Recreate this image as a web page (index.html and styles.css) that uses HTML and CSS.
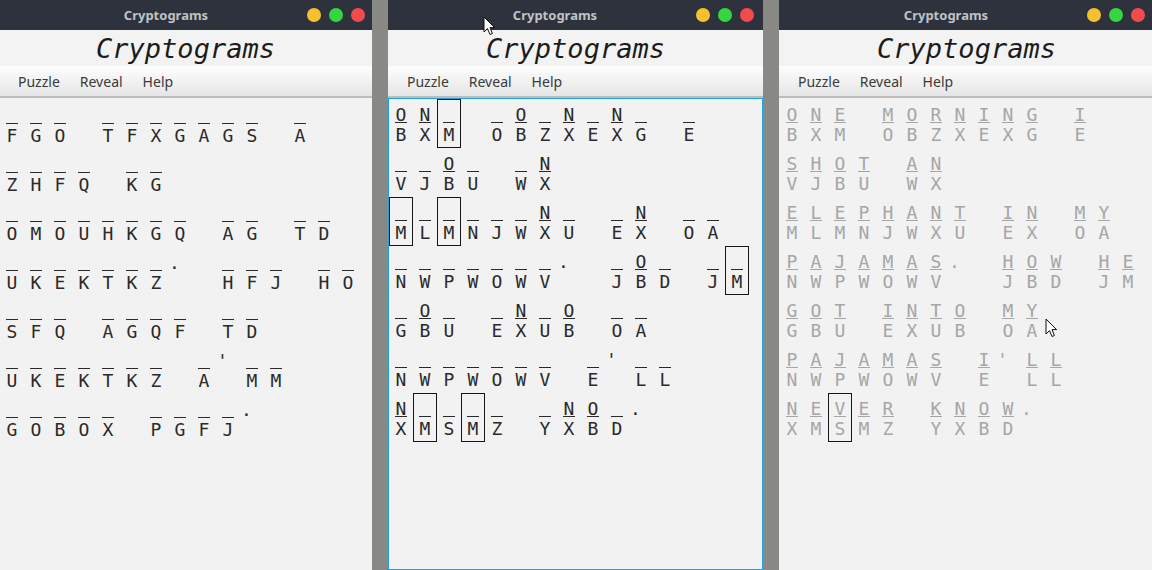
FILE: index.html
```html
<!DOCTYPE html>
<html>
<head>
<meta charset="utf-8">
<title>Cryptograms</title>
<link rel="stylesheet" href="styles.css">
</head>
<body>
<div class="desk">
  <section class="win win-first">
    <div class="titlebar"><span class="ttl">Cryptograms</span><span class="lights"><span class="light yellow"></span><span class="light green"></span><span class="light red"></span></span></div>
    <div class="header">Cryptograms</div>
    <nav class="menubar"><span class="menu">Puzzle</span><span class="menu">Reveal</span><span class="menu">Help</span></nav>
    <div class="content first-content">
      <span class="w"><span class="c"><span class="g"></span><span class="k">F</span></span><span class="c"><span class="g"></span><span class="k">G</span></span><span class="c"><span class="g"></span><span class="k">O</span></span></span>
      <span class="w"><span class="c"><span class="g"></span><span class="k">T</span></span><span class="c"><span class="g"></span><span class="k">F</span></span><span class="c"><span class="g"></span><span class="k">X</span></span><span class="c"><span class="g"></span><span class="k">G</span></span><span class="c"><span class="g"></span><span class="k">A</span></span><span class="c"><span class="g"></span><span class="k">G</span></span><span class="c"><span class="g"></span><span class="k">S</span></span></span>
      <span class="w"><span class="c"><span class="g"></span><span class="k">A</span></span></span>
      <span class="w"><span class="c"><span class="g"></span><span class="k">Z</span></span><span class="c"><span class="g"></span><span class="k">H</span></span><span class="c"><span class="g"></span><span class="k">F</span></span><span class="c"><span class="g"></span><span class="k">Q</span></span></span>
      <span class="w"><span class="c"><span class="g"></span><span class="k">K</span></span><span class="c"><span class="g"></span><span class="k">G</span></span></span>
      <span class="w"><span class="c"><span class="g"></span><span class="k">O</span></span><span class="c"><span class="g"></span><span class="k">M</span></span><span class="c"><span class="g"></span><span class="k">O</span></span><span class="c"><span class="g"></span><span class="k">U</span></span><span class="c"><span class="g"></span><span class="k">H</span></span><span class="c"><span class="g"></span><span class="k">K</span></span><span class="c"><span class="g"></span><span class="k">G</span></span><span class="c"><span class="g"></span><span class="k">Q</span></span></span>
      <span class="w"><span class="c"><span class="g"></span><span class="k">A</span></span><span class="c"><span class="g"></span><span class="k">G</span></span></span>
      <span class="w"><span class="c"><span class="g"></span><span class="k">T</span></span><span class="c"><span class="g"></span><span class="k">D</span></span></span>
      <span class="w"><span class="c"><span class="g"></span><span class="k">U</span></span><span class="c"><span class="g"></span><span class="k">K</span></span><span class="c"><span class="g"></span><span class="k">E</span></span><span class="c"><span class="g"></span><span class="k">K</span></span><span class="c"><span class="g"></span><span class="k">T</span></span><span class="c"><span class="g"></span><span class="k">K</span></span><span class="c"><span class="g"></span><span class="k">Z</span></span><span class="c p"><span class="g">.</span></span></span>
      <span class="w"><span class="c"><span class="g"></span><span class="k">H</span></span><span class="c"><span class="g"></span><span class="k">F</span></span><span class="c"><span class="g"></span><span class="k">J</span></span></span>
      <span class="w"><span class="c"><span class="g"></span><span class="k">H</span></span><span class="c"><span class="g"></span><span class="k">O</span></span></span>
      <span class="w"><span class="c"><span class="g"></span><span class="k">S</span></span><span class="c"><span class="g"></span><span class="k">F</span></span><span class="c"><span class="g"></span><span class="k">Q</span></span></span>
      <span class="w"><span class="c"><span class="g"></span><span class="k">A</span></span><span class="c"><span class="g"></span><span class="k">G</span></span><span class="c"><span class="g"></span><span class="k">Q</span></span><span class="c"><span class="g"></span><span class="k">F</span></span></span>
      <span class="w"><span class="c"><span class="g"></span><span class="k">T</span></span><span class="c"><span class="g"></span><span class="k">D</span></span></span>
      <span class="w"><span class="c"><span class="g"></span><span class="k">U</span></span><span class="c"><span class="g"></span><span class="k">K</span></span><span class="c"><span class="g"></span><span class="k">E</span></span><span class="c"><span class="g"></span><span class="k">K</span></span><span class="c"><span class="g"></span><span class="k">T</span></span><span class="c"><span class="g"></span><span class="k">K</span></span><span class="c"><span class="g"></span><span class="k">Z</span></span></span>
      <span class="w"><span class="c"><span class="g"></span><span class="k">A</span></span><span class="c p"><span class="g">'</span></span><span class="c"><span class="g"></span><span class="k">M</span></span><span class="c"><span class="g"></span><span class="k">M</span></span></span>
      <span class="w"><span class="c"><span class="g"></span><span class="k">G</span></span><span class="c"><span class="g"></span><span class="k">O</span></span><span class="c"><span class="g"></span><span class="k">B</span></span><span class="c"><span class="g"></span><span class="k">O</span></span><span class="c"><span class="g"></span><span class="k">X</span></span></span>
      <span class="w"><span class="c"><span class="g"></span><span class="k">P</span></span><span class="c"><span class="g"></span><span class="k">G</span></span><span class="c"><span class="g"></span><span class="k">F</span></span><span class="c"><span class="g"></span><span class="k">J</span></span><span class="c p"><span class="g">.</span></span></span>
    </div>
  </section>

  <section class="win">
    <div class="titlebar"><span class="ttl">Cryptograms</span><span class="lights"><span class="light yellow"></span><span class="light green"></span><span class="light red"></span></span></div>
    <div class="header">Cryptograms</div>
    <nav class="menubar"><span class="menu">Puzzle</span><span class="menu">Reveal</span><span class="menu">Help</span></nav>
    <div class="content focus">
      <span class="w"><span class="c"><span class="g">O</span><span class="k">B</span></span><span class="c"><span class="g">N</span><span class="k">X</span></span><span class="c sel"><span class="g"></span><span class="k">M</span></span></span>
      <span class="w"><span class="c"><span class="g"></span><span class="k">O</span></span><span class="c"><span class="g">O</span><span class="k">B</span></span><span class="c"><span class="g"></span><span class="k">Z</span></span><span class="c"><span class="g">N</span><span class="k">X</span></span><span class="c"><span class="g"></span><span class="k">E</span></span><span class="c"><span class="g">N</span><span class="k">X</span></span><span class="c"><span class="g"></span><span class="k">G</span></span></span>
      <span class="w"><span class="c"><span class="g"></span><span class="k">E</span></span></span>
      <span class="w"><span class="c"><span class="g"></span><span class="k">V</span></span><span class="c"><span class="g"></span><span class="k">J</span></span><span class="c"><span class="g">O</span><span class="k">B</span></span><span class="c"><span class="g"></span><span class="k">U</span></span></span>
      <span class="w"><span class="c"><span class="g"></span><span class="k">W</span></span><span class="c"><span class="g">N</span><span class="k">X</span></span></span>
      <span class="w"><span class="c sel"><span class="g"></span><span class="k">M</span></span><span class="c"><span class="g"></span><span class="k">L</span></span><span class="c sel"><span class="g"></span><span class="k">M</span></span><span class="c"><span class="g"></span><span class="k">N</span></span><span class="c"><span class="g"></span><span class="k">J</span></span><span class="c"><span class="g"></span><span class="k">W</span></span><span class="c"><span class="g">N</span><span class="k">X</span></span><span class="c"><span class="g"></span><span class="k">U</span></span></span>
      <span class="w"><span class="c"><span class="g"></span><span class="k">E</span></span><span class="c"><span class="g">N</span><span class="k">X</span></span></span>
      <span class="w"><span class="c"><span class="g"></span><span class="k">O</span></span><span class="c"><span class="g"></span><span class="k">A</span></span></span>
      <span class="w"><span class="c"><span class="g"></span><span class="k">N</span></span><span class="c"><span class="g"></span><span class="k">W</span></span><span class="c"><span class="g"></span><span class="k">P</span></span><span class="c"><span class="g"></span><span class="k">W</span></span><span class="c"><span class="g"></span><span class="k">O</span></span><span class="c"><span class="g"></span><span class="k">W</span></span><span class="c"><span class="g"></span><span class="k">V</span></span><span class="c p"><span class="g">.</span></span></span>
      <span class="w"><span class="c"><span class="g"></span><span class="k">J</span></span><span class="c"><span class="g">O</span><span class="k">B</span></span><span class="c"><span class="g"></span><span class="k">D</span></span></span>
      <span class="w"><span class="c"><span class="g"></span><span class="k">J</span></span><span class="c sel"><span class="g"></span><span class="k">M</span></span></span>
      <span class="w"><span class="c"><span class="g"></span><span class="k">G</span></span><span class="c"><span class="g">O</span><span class="k">B</span></span><span class="c"><span class="g"></span><span class="k">U</span></span></span>
      <span class="w"><span class="c"><span class="g"></span><span class="k">E</span></span><span class="c"><span class="g">N</span><span class="k">X</span></span><span class="c"><span class="g"></span><span class="k">U</span></span><span class="c"><span class="g">O</span><span class="k">B</span></span></span>
      <span class="w"><span class="c"><span class="g"></span><span class="k">O</span></span><span class="c"><span class="g"></span><span class="k">A</span></span></span>
      <span class="w"><span class="c"><span class="g"></span><span class="k">N</span></span><span class="c"><span class="g"></span><span class="k">W</span></span><span class="c"><span class="g"></span><span class="k">P</span></span><span class="c"><span class="g"></span><span class="k">W</span></span><span class="c"><span class="g"></span><span class="k">O</span></span><span class="c"><span class="g"></span><span class="k">W</span></span><span class="c"><span class="g"></span><span class="k">V</span></span></span>
      <span class="w"><span class="c"><span class="g"></span><span class="k">E</span></span><span class="c p"><span class="g">'</span></span><span class="c"><span class="g"></span><span class="k">L</span></span><span class="c"><span class="g"></span><span class="k">L</span></span></span>
      <span class="w"><span class="c"><span class="g">N</span><span class="k">X</span></span><span class="c sel"><span class="g"></span><span class="k">M</span></span><span class="c"><span class="g"></span><span class="k">S</span></span><span class="c sel"><span class="g"></span><span class="k">M</span></span><span class="c"><span class="g"></span><span class="k">Z</span></span></span>
      <span class="w"><span class="c"><span class="g"></span><span class="k">Y</span></span><span class="c"><span class="g">N</span><span class="k">X</span></span><span class="c"><span class="g">O</span><span class="k">B</span></span><span class="c"><span class="g"></span><span class="k">D</span></span><span class="c p"><span class="g">.</span></span></span>
    </div>
  </section>

  <section class="win">
    <div class="titlebar"><span class="ttl">Cryptograms</span><span class="lights"><span class="light yellow"></span><span class="light green"></span><span class="light red"></span></span></div>
    <div class="header">Cryptograms</div>
    <nav class="menubar"><span class="menu">Puzzle</span><span class="menu">Reveal</span><span class="menu">Help</span></nav>
    <div class="content solved">
      <span class="w"><span class="c"><span class="g">O</span><span class="k">B</span></span><span class="c"><span class="g">N</span><span class="k">X</span></span><span class="c"><span class="g">E</span><span class="k">M</span></span></span>
      <span class="w"><span class="c"><span class="g">M</span><span class="k">O</span></span><span class="c"><span class="g">O</span><span class="k">B</span></span><span class="c"><span class="g">R</span><span class="k">Z</span></span><span class="c"><span class="g">N</span><span class="k">X</span></span><span class="c"><span class="g">I</span><span class="k">E</span></span><span class="c"><span class="g">N</span><span class="k">X</span></span><span class="c"><span class="g">G</span><span class="k">G</span></span></span>
      <span class="w"><span class="c"><span class="g">I</span><span class="k">E</span></span></span>
      <span class="w"><span class="c"><span class="g">S</span><span class="k">V</span></span><span class="c"><span class="g">H</span><span class="k">J</span></span><span class="c"><span class="g">O</span><span class="k">B</span></span><span class="c"><span class="g">T</span><span class="k">U</span></span></span>
      <span class="w"><span class="c"><span class="g">A</span><span class="k">W</span></span><span class="c"><span class="g">N</span><span class="k">X</span></span></span>
      <span class="w"><span class="c"><span class="g">E</span><span class="k">M</span></span><span class="c"><span class="g">L</span><span class="k">L</span></span><span class="c"><span class="g">E</span><span class="k">M</span></span><span class="c"><span class="g">P</span><span class="k">N</span></span><span class="c"><span class="g">H</span><span class="k">J</span></span><span class="c"><span class="g">A</span><span class="k">W</span></span><span class="c"><span class="g">N</span><span class="k">X</span></span><span class="c"><span class="g">T</span><span class="k">U</span></span></span>
      <span class="w"><span class="c"><span class="g">I</span><span class="k">E</span></span><span class="c"><span class="g">N</span><span class="k">X</span></span></span>
      <span class="w"><span class="c"><span class="g">M</span><span class="k">O</span></span><span class="c"><span class="g">Y</span><span class="k">A</span></span></span>
      <span class="w"><span class="c"><span class="g">P</span><span class="k">N</span></span><span class="c"><span class="g">A</span><span class="k">W</span></span><span class="c"><span class="g">J</span><span class="k">P</span></span><span class="c"><span class="g">A</span><span class="k">W</span></span><span class="c"><span class="g">M</span><span class="k">O</span></span><span class="c"><span class="g">A</span><span class="k">W</span></span><span class="c"><span class="g">S</span><span class="k">V</span></span><span class="c p"><span class="g">.</span></span></span>
      <span class="w"><span class="c"><span class="g">H</span><span class="k">J</span></span><span class="c"><span class="g">O</span><span class="k">B</span></span><span class="c"><span class="g">W</span><span class="k">D</span></span></span>
      <span class="w"><span class="c"><span class="g">H</span><span class="k">J</span></span><span class="c"><span class="g">E</span><span class="k">M</span></span></span>
      <span class="w"><span class="c"><span class="g">G</span><span class="k">G</span></span><span class="c"><span class="g">O</span><span class="k">B</span></span><span class="c"><span class="g">T</span><span class="k">U</span></span></span>
      <span class="w"><span class="c"><span class="g">I</span><span class="k">E</span></span><span class="c"><span class="g">N</span><span class="k">X</span></span><span class="c"><span class="g">T</span><span class="k">U</span></span><span class="c"><span class="g">O</span><span class="k">B</span></span></span>
      <span class="w"><span class="c"><span class="g">M</span><span class="k">O</span></span><span class="c"><span class="g">Y</span><span class="k">A</span></span></span>
      <span class="w"><span class="c"><span class="g">P</span><span class="k">N</span></span><span class="c"><span class="g">A</span><span class="k">W</span></span><span class="c"><span class="g">J</span><span class="k">P</span></span><span class="c"><span class="g">A</span><span class="k">W</span></span><span class="c"><span class="g">M</span><span class="k">O</span></span><span class="c"><span class="g">A</span><span class="k">W</span></span><span class="c"><span class="g">S</span><span class="k">V</span></span></span>
      <span class="w"><span class="c"><span class="g">I</span><span class="k">E</span></span><span class="c p"><span class="g">'</span></span><span class="c"><span class="g">L</span><span class="k">L</span></span><span class="c"><span class="g">L</span><span class="k">L</span></span></span>
      <span class="w"><span class="c"><span class="g">N</span><span class="k">X</span></span><span class="c"><span class="g">E</span><span class="k">M</span></span><span class="c sel"><span class="g">V</span><span class="k">S</span></span><span class="c"><span class="g">E</span><span class="k">M</span></span><span class="c"><span class="g">R</span><span class="k">Z</span></span></span>
      <span class="w"><span class="c"><span class="g">K</span><span class="k">Y</span></span><span class="c"><span class="g">N</span><span class="k">X</span></span><span class="c"><span class="g">O</span><span class="k">B</span></span><span class="c"><span class="g">W</span><span class="k">D</span></span><span class="c p"><span class="g">.</span></span></span>
    </div>
  </section>
</div>

<svg class="cursor cursor-a" width="13" height="20" viewBox="0 0 13 20"><path d="M1 1 L1 16 L4.5 12.6 L7 18.5 L9.4 17.5 L7 11.6 L11.6 11.6 Z" fill="#ffffff" stroke="#111111" stroke-width="1" stroke-linejoin="round"/></svg>
<svg class="cursor cursor-b" width="13" height="20" viewBox="0 0 13 20"><path d="M1 1 L1 16 L4.5 12.6 L7 18.5 L9.4 17.5 L7 11.6 L11.6 11.6 Z" fill="#ffffff" stroke="#111111" stroke-width="1" stroke-linejoin="round"/></svg>
</body>
</html>
```

FILE: styles.css
```css
* { box-sizing: border-box; }

html, body {
  margin: 0;
  height: 570px;
  overflow: hidden;
}

body {
  position: relative;
  background: #888984;
  font-family: "Noto Sans", "Open Sans", sans-serif;
}

.desk {
  display: flex;
  gap: 16px;
  margin-left: -1px;
  height: 570px;
}

.win {
  flex: none;
  width: 375px;
  display: flex;
  flex-direction: column;
  background: #f2f2f2;
}

.win-first { width: 373px; }

.titlebar {
  flex: none;
  height: 30px;
  background: #2e323c;
  display: flex;
  align-items: center;
}

.ttl {
  flex: none;
  width: 308px;
  padding-left: 26px;
  text-align: center;
  font-weight: bold;
  font-size: 13px;
  color: #bfc2c8;
}

.lights {
  display: flex;
  gap: 8px;
}

.light {
  width: 14px;
  height: 14px;
  border-radius: 50%;
}

.yellow { background: #f6c02e; }
.green { background: #35d640; }
.red { background: #f14b4e; }

.header {
  flex: none;
  height: 36px;
  padding-top: 2px;
  line-height: 34px;
  text-align: center;
  font-family: "DejaVu Sans Mono", monospace;
  font-style: italic;
  font-size: 27px;
  color: #1c1c1c;
  background: #f3f3f3;
}

.menubar {
  flex: none;
  height: 32px;
  display: flex;
  align-items: center;
  padding-left: 9px;
  background: linear-gradient(#fdfdfd, #e6e6e6);
  border-bottom: 2px solid #bdbdbd;
}

.menu {
  padding: 0 10px;
  font-size: 14px;
  color: #3a3a3a;
}

.content {
  flex: 1;
  display: flex;
  flex-wrap: wrap;
  align-content: flex-start;
  column-gap: 24px;
  border: 1px solid transparent;
  font-family: "DejaVu Sans Mono", monospace;
  font-size: 18px;
  color: #2a2a2a;
}

.first-content { padding-top: 1px; }

.focus { border-color: #1ea4dd; }

.solved { color: #a6a6a6; }

.w { display: flex; }

.c {
  width: 24px;
  height: 49px;
  padding-top: 7px;
  border: 1px solid transparent;
}

.sel { border-color: #151515; }

.g {
  display: block;
  width: 12px;
  height: 15px;
  margin: 0 auto;
  line-height: 15px;
  text-align: center;
}

.k {
  display: block;
  width: 12px;
  height: 24px;
  margin: 0 auto;
  line-height: 23px;
  text-align: center;
  border-top: 1px solid currentColor;
}

.p .g {
  width: auto;
  margin: 0;
  text-align: left;
}

.cursor {
  position: absolute;
}

.cursor-a { left: 483px; top: 16px; }
.cursor-b { left: 1045px; top: 318px; }
```
